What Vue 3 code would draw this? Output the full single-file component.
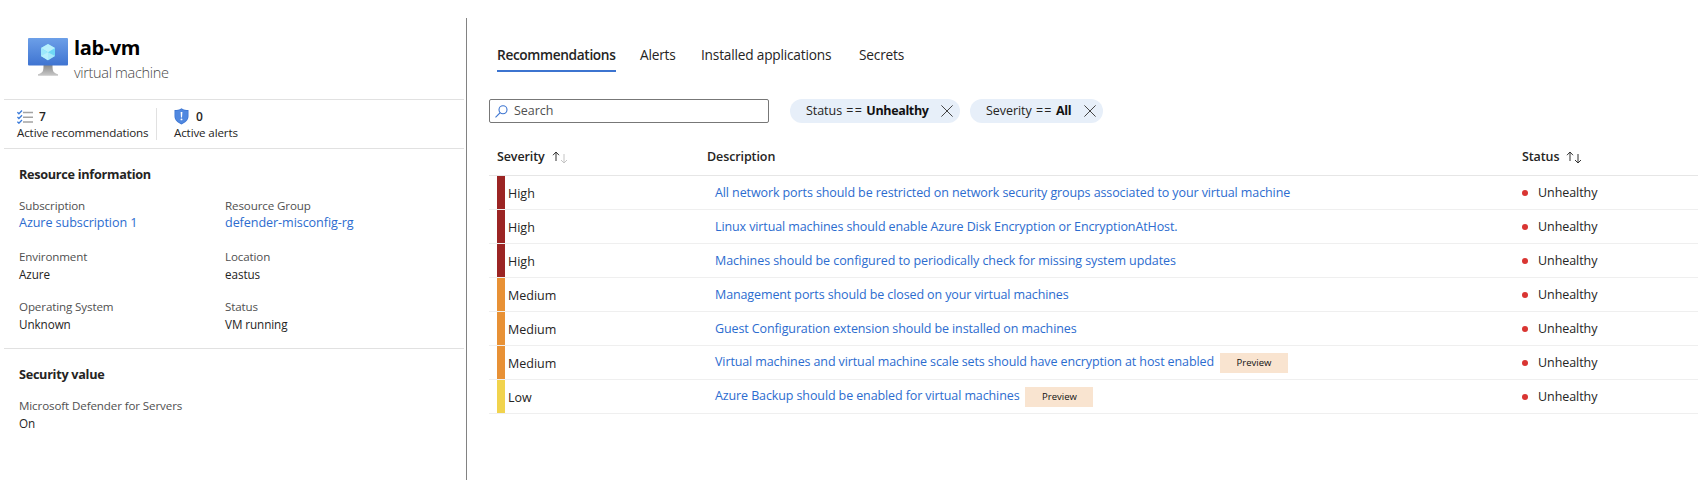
<script setup>
const resource = [
  { label: 'Subscription', value: 'Azure subscription 1', link: true },
  { label: 'Resource Group', value: 'defender-misconfig-rg', link: true },
  { label: 'Environment', value: 'Azure' },
  { label: 'Location', value: 'eastus' },
  { label: 'Operating System', value: 'Unknown' },
  { label: 'Status', value: 'VM running' },
]
const rows = [
  { severity: 'High', text: 'All network ports should be restricted on network security groups associated to your virtual machine' },
  { severity: 'High', text: 'Linux virtual machines should enable Azure Disk Encryption or EncryptionAtHost.' },
  { severity: 'High', text: 'Machines should be configured to periodically check for missing system updates' },
  { severity: 'Medium', text: 'Management ports should be closed on your virtual machines' },
  { severity: 'Medium', text: 'Guest Configuration extension should be installed on machines' },
  { severity: 'Medium', text: 'Virtual machines and virtual machine scale sets should have encryption at host enabled', preview: true },
  { severity: 'Low', text: 'Azure Backup should be enabled for virtual machines', preview: true },
]
</script>

<template>
  <div class="page">
    <aside class="side">
      <header class="head">
        <svg class="vm" width="40" height="39" viewBox="0 0 40 39">
          <defs>
            <linearGradient id="screen" x1="0" y1="0" x2="0" y2="1">
              <stop offset="0" stop-color="#6c9fe8" />
              <stop offset="1" stop-color="#3f74d1" />
            </linearGradient>
            <linearGradient id="stand" x1="0" y1="0" x2="0" y2="1">
              <stop offset="0" stop-color="#8a8a8a" />
              <stop offset="1" stop-color="#c9c9c9" />
            </linearGradient>
          </defs>
          <path d="M15.500 27h9c0 6 .5 8 5.500 9.200v1.500H10v-1.500c5-1.200 5.500-3.200 5.500-9.200z" fill="url(#stand)" />
          <rect width="40" height="27.500" rx="1" fill="url(#screen)" />
          <path d="M20 6l7 4v8l-7 4.200-7-4.200v-8z" fill="#6fd8f6" />
          <path d="M20 6l7 4-7 4.200-7-4.200z" fill="#b9f0fc" />
          <path d="M13 10l7 4.200v8l-7-4.200z" fill="#9ce8fb" />
          <path d="M13 18l7-3.800 7 3.800-7 4.200z" fill="#c6f3fd" opacity=".65" />
        </svg>
        <div>
          <h1>lab-vm</h1>
          <p class="kind">virtual machine</p>
        </div>
      </header>

      <div class="stats">
        <div class="stat first">
          <div class="count">
            <svg width="16" height="14" viewBox="0 0 16 14" fill="none">
              <path d="M6 2.500h10M6 7.200h10M6 12h10" stroke="#a3a3a3" stroke-width="1.500" />
              <path d="M.4 2.200l1.500 1.500L5 .5M.4 7l1.500 1.500L5 5.300M.4 11.700l1.500 1.500L5 10" stroke="#3c7bd9" stroke-width="1.300" />
            </svg>
            <b>7</b>
          </div>
          <div class="t12">Active recommendations</div>
        </div>
        <div class="stat">
          <div class="count shield">
            <svg width="15" height="17" viewBox="0 0 15 17">
              <path d="M7.500.3C9.600 2 12 2.100 14.500 2.100v6.200c0 4-3.500 6.500-7 8.300C4 14.800.5 12.300.5 8.300V2.100C3 2.100 5.400 2 7.500.3z" fill="#3d76d3" />
              <path d="M7.500 1.300c2 1.400 4 1.600 6.200 1.700v5.300c0 3.400-3 5.700-6.200 7.300-3.200-1.600-6.200-3.900-6.200-7.300V3c2.200-.1 4.200-.3 6.200-1.700z" fill="#5088e0" />
              <path d="M6.600 4h1.800l-.4 5.600H7z" fill="#fff" />
              <circle cx="7.500" cy="11.400" r=".95" fill="#fff" />
            </svg>
            <b>0</b>
          </div>
          <div class="t12">Active alerts</div>
        </div>
      </div>

      <section class="info">
        <h2>Resource information</h2>
        <dl class="grid">
          <div v-for="item in resource" :key="item.label">
            <dt>{{ item.label }}</dt>
            <dd :class="{ link: item.link }">{{ item.value }}</dd>
          </div>
        </dl>
      </section>

      <section class="value">
        <h2>Security value</h2>
        <dl>
          <dt>Microsoft Defender for Servers</dt>
          <dd>On</dd>
        </dl>
      </section>
    </aside>

    <main class="main">
      <nav class="tabs">
        <a class="active">Recommendations</a>
        <a class="alerts">Alerts</a>
        <a class="apps">Installed applications</a>
        <a class="secrets">Secrets</a>
      </nav>

      <div class="filters">
        <div class="search">
          <svg width="13" height="13" viewBox="0 0 13 13" fill="none" stroke="#3c74d0" stroke-width="1.100">
            <circle cx="8" cy="4.800" r="4" />
            <path d="M5.200 7.700L.5 12.400" />
          </svg>
          <span>Search</span>
        </div>
        <div class="pill p1">
          <span>Status <i>==</i> <b>Unhealthy</b></span>
          <svg width="12" height="12" viewBox="0 0 12 12"><path d="M.4.4l11.200 11.200M11.600.4L.4 11.600" stroke="#444" /></svg>
        </div>
        <div class="pill p2">
          <span>Severity <i>==</i> <b>All</b></span>
          <svg width="12" height="12" viewBox="0 0 12 12"><path d="M.4.4l11.200 11.200M11.600.4L.4 11.600" stroke="#444" /></svg>
        </div>
      </div>

      <div class="table">
        <div class="row thead">
          <div class="c1">
            <span>Severity</span>
            <svg width="16" height="13" viewBox="0 0 16 13" fill="none">
              <path d="M4 10V1M1 4.200L4 1l3 3.200" stroke="#333" />
              <path d="M12 3v9M9 9l3 3 3-3" stroke="#c4c4c4" />
            </svg>
          </div>
          <div class="c2 desc">Description</div>
          <div class="c3">
            <span>Status</span>
            <svg width="16" height="13" viewBox="0 0 16 13" fill="none" stroke="#333">
              <path d="M4 10V1M1 4.200L4 1l3 3.200M12 3v9M9 9l3 3 3-3" />
            </svg>
          </div>
        </div>
        <div v-for="row in rows" :key="row.text" class="row">
          <div class="c1">
            <span class="bar" :class="row.severity.toLowerCase()"></span>
            <span class="level">{{ row.severity }}</span>
          </div>
          <div class="c2 item" :class="{ raised: row.preview }">
            <a>{{ row.text }}</a>
            <span v-if="row.preview" class="badge">Preview</span>
          </div>
          <div class="c3">
            <span class="dot"></span>
            <span class="unhealthy">Unhealthy</span>
          </div>
        </div>
      </div>
    </main>
  </div>
</template>

<style>
body { background: #fff; }
</style>

<style scoped>
.page { display: flex; box-sizing: border-box; height: 480px; padding-top: 18px; overflow: hidden; background: #fff; color: #252423; font: 12.500px/18px "Open Sans", "Noto Sans", sans-serif; }
h1, h2, p, dl, dt, dd { margin: 0; }
i { font-style: normal; }
svg { display: block; flex: none; }
.side { box-sizing: border-box; width: 467px; flex: none; padding: 0 2px 0 4px; border-right: 1px solid #828282; }
.head { display: flex; gap: 6px; height: 82px; box-sizing: border-box; padding: 20px 0 0 24px; border-bottom: 1px solid #e1e1e1; }
h1 { margin-top: -3px; font-size: 20px; line-height: 26px; font-weight: 700; color: #000; letter-spacing: -.4px; }
.kind { font-size: 14.500px; line-height: 20px; font-weight: 300; color: #484848; letter-spacing: -.33px; margin-top: 2px; }
.stats { display: flex; height: 49px; box-sizing: border-box; padding-top: 8px; border-bottom: 1px solid #e1e1e1; }
.stat { height: 32px; padding-left: 17px; }
.first { width: 153px; padding-left: 13px; box-sizing: border-box; border-right: 1px solid #e1e1e1; }
.first .count { gap: 6px; }
.count { display: flex; align-items: center; gap: 7px; height: 17px; font-size: 12px; }
.count b { font-weight: 600; }
.t12 { font-size: 11.600px; line-height: 16px; letter-spacing: -.13px; white-space: nowrap; }
.info { height: 200px; box-sizing: border-box; padding: 16px 0 0 15px; border-bottom: 1px solid #e1e1e1; }
h2 { font-size: 12.700px; line-height: 18px; font-weight: 700; letter-spacing: -.3px; }
.grid { display: grid; grid-template-columns: 206px 1fr; grid-auto-rows: 50.500px; margin-top: 15px; }
dt { font-size: 11.600px; line-height: 16px; color: #505050; letter-spacing: -.12px; }
dd { font-size: 11.700px; line-height: 18px; letter-spacing: -.08px; }
dd.link { font-size: 12.600px; line-height: 17px; letter-spacing: -.08px; }
.link { color: #2c6ccf; }
.value { padding: 16px 0 0 15px; }
.value dl { margin-top: 15px; }
.main { flex: 1; min-width: 0; padding: 24px 6px 0 22px; }
.tabs { display: flex; height: 30px; padding-left: 8px; font-size: 13.700px; line-height: 26px; white-space: nowrap; }
.tabs a { letter-spacing: -.2px; }
.tabs .active { box-sizing: border-box; width: 119px; height: 30px; font-weight: 600; letter-spacing: -.36px; border-bottom: 2px solid #3c74d0; }
.alerts { width: 61px; margin-left: 24px; }
.apps { width: 158px; }
.filters { display: flex; align-items: center; height: 24px; margin-top: 27px; }
.search { display: flex; align-items: center; gap: 6px; box-sizing: border-box; width: 280px; height: 24px; padding-left: 5px; border: 1px solid #777; border-radius: 2px; color: #505050; }
.search span { letter-spacing: -.05px; }
.pill { display: flex; align-items: center; justify-content: space-between; box-sizing: border-box; height: 24px; border-radius: 12px; padding: 0 7px 0 16px; background: #e7eff9; white-space: nowrap; letter-spacing: -.05px; }
.pill i { letter-spacing: 1.300px; margin-left: 1px; }
.pill b { color: #111; letter-spacing: -.35px; }
.p1 { width: 170px; margin-left: 21px; }
.p2 { width: 133px; margin-left: 10px; }
.table { margin-top: 16px; }
.row { display: grid; grid-template-columns: 226px 807px 1fr; height: 34px; box-sizing: border-box; border-bottom: 1px solid #efefef; }
.thead { height: 37px; border-bottom-color: #e6e6e6; font-weight: 600; letter-spacing: -.1px; }
.c1, .c2, .c3 { display: flex; align-items: center; min-width: 0; white-space: nowrap; }
.c1 { padding-left: 8px; }
.thead .c1, .thead .c3 { gap: 7px; }
.desc { margin-left: -8px; }
.bar { align-self: stretch; width: 8px; margin-right: 3px; }
.high { background: #9b2423; }
.medium { background: #e89135; }
.low { background: #f1d34d; }
.level { padding-top: 3px; }
.item a { color: #2c6ccf; letter-spacing: -.11px; }
.row:nth-child(2) .item a { letter-spacing: -.098px; }
.row:nth-child(4) .item a { letter-spacing: -.075px; }
.raised a { margin-top: -2px; }
.badge { box-sizing: border-box; width: 68px; height: 20px; margin-left: 6px; background: #f9e4d0; color: #111; font-size: 9.500px; line-height: 20px; text-align: center; }
.dot { width: 6px; height: 6px; border-radius: 50%; background: #d93532; margin-right: 10px; }
.unhealthy { letter-spacing: -.07px; }
</style>
